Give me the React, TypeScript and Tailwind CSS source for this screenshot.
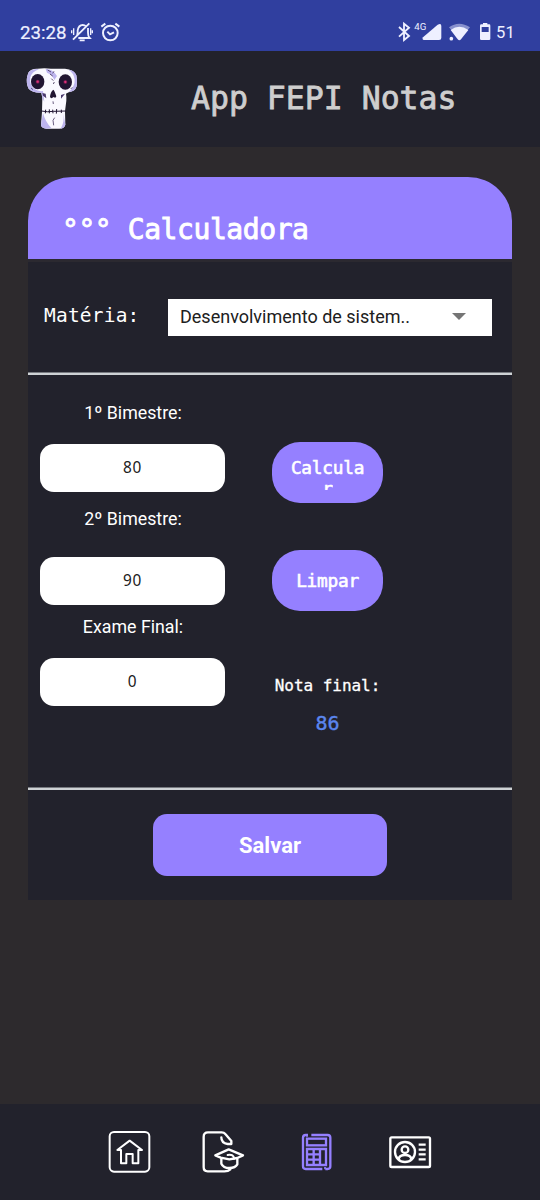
import type { ReactNode } from "react";

const mono = "font-['DejaVu_Sans_Mono',monospace]";

function Skull() {
  return (
    <svg className="h-[80px] w-[75px]" viewBox="0 0 225 240">
      <path
        d="M40 38Q48 25 68 26Q88 23 108 26L150 26Q176 28 184 46Q188 60 185 79Q180 95 161 97L153 101Q155 112 154 122L150 154L151 194Q148 206 133 206L94 206Q79 205 78 195L81 156L82 113L79 98Q53 99 41 86Q33 72 36 52Z"
        fill="#faf9ff"
      />
      <path
        d="M40 38Q48 26 72 27Q50 36 46 52Q42 77 60 88Q70 95 84 93L88 125L82 114L79 98Q53 99 41 86Q33 72 36 52ZM84 159Q91 186 109 204L94 206Q79 205 78 195ZM160 29Q178 30 184 46Q188 60 185 79Q180 95 161 97Q181 78 179 58Q176 38 160 29ZM145 161L151 194Q148 204 137 206Q149 185 145 161ZM92 27Q112 26 126 48L118 60Q112 44 96 38Z"
        fill="#bdb4ee"
      />
      <ellipse cx="68" cy="65" rx="20" ry="23" fill="#211532" />
      <ellipse cx="151" cy="66" rx="20" ry="23" fill="#211532" />
      <circle cx="68" cy="65" r="6" fill="#681d4b" />
      <circle cx="151" cy="66" r="6" fill="#681d4b" />
      <circle cx="68" cy="65" r="3.5" fill="#e0307a" />
      <circle cx="151" cy="66" r="3.5" fill="#e0307a" />
      <path d="M115 89Q119 92 124 109Q122 116 116 111Q108 118 105 111Q106 96 115 89Z" fill="#211532" />
      <path d="M98 30L108 36M105 42L113 48M109 56L115 62M117 34L113 40M118 66L115 72" fill="none" stroke="#49395f" strokeWidth="2.6" />
      <path d="M79 153Q97 157 116 154L152 153M92 149L91 160M103 148L103 160M113 149L114 160M125 147L124 161M139 149L139 159" fill="none" stroke="#211532" strokeWidth="3" />
      <path d="M114 124L115 132M119 173L114 181L116 196M48 84L54 89M172 82L167 87" fill="none" stroke="#4d3e68" strokeWidth="2.5" />
      <path d="M82 99L92 101L94 115L84 107ZM138 105L150 101L138 116Z" fill="#4b3a6e" />
    </svg>
  );
}

function StatusBar() {
  return (
    <div className="flex h-[51px] shrink-0 items-start justify-between bg-[#303f9f] font-[Roboto,sans-serif] text-[#eef0ff]">
      <div className="flex pl-[20px] pt-[20px]">
        <span className="w-[50px] text-[18.7px] leading-[26px] [-webkit-text-stroke:0.2px_#eef0ff]">23:28</span>
        <svg className="h-[26px] w-[54px]" viewBox="210 60 162 78" fill="none" stroke="currentColor" strokeWidth="5.5">
          <path d="M227 111Q233 107 233 96V91Q236 75 248 75Q254 75 258 79M264 84V98Q264 109 269 114H235M219 119L268 70M239 121H254" />
          <path d="M215 91V100M221 85V105M272 85V105M277 91V100" strokeWidth="4" />
          <circle cx="331" cy="99" r="22" strokeWidth="6" />
          <path d="M304 80L316 71M346 71L358 80M322 95L330 103L342 97" strokeWidth="6" />
        </svg>
      </div>
      <div className="flex pr-[25px] pt-[20px]">
        <svg className="h-[26px] w-[104px]" viewBox="380 60 312 78">
          <path d="M386 81L416 108L401 120V71L416 83L386 110" fill="none" stroke="currentColor" strokeWidth="5.5" />
          <text x="432" y="91" fill="currentColor" fontFamily="Roboto, sans-serif" fontSize="29">4G</text>
          <path d="M461 120Q454 119 458 112L502 74Q513 68 513 78V113Q513 120 506 120Z" fill="currentColor" />
          <path d="M536 82Q566 60 599 82L589 94Q566 79 546 94Z" fill="#8790ce" />
          <path d="M541 90Q567 71 594 90L572 118Q567 124 562 118Z" fill="currentColor" />
          <circle cx="543" cy="116" r="5.5" fill="currentColor" />
          <path d="M638 73V69H651V73H657Q660 73 660 77V116Q660 120 656 120H633Q629 120 629 116V77Q629 73 633 73Z" fill="currentColor" />
          <path d="M634 81H655V96H634Z" fill="#303f9f" />
        </svg>
        <span className="-ml-[5px] w-[19px] text-[16.5px] leading-[26px] tracking-[0.3px]">51</span>
      </div>
    </div>
  );
}

function Grade({ label, value, gap }: { label: string; value: string; gap: string }) {
  return (
    <div className={`flex flex-col items-center ${gap}`}>
      <div className="h-[24px] pl-[1px] font-[Roboto,sans-serif] text-[17.8px] leading-[24px] text-white">{label}</div>
      <div className="h-[48px] w-[185px] rounded-[14px] bg-white text-center font-['Noto_Sans',sans-serif] text-[15.4px] leading-[48px] tracking-[0.7px] text-[#202020]">
        {value}
      </div>
    </div>
  );
}

function Pill({ children }: { children: ReactNode }) {
  return (
    <button
      className={`flex h-[61px] w-[111px] flex-col items-center rounded-[28px] bg-[#9580ff] pt-[14px] text-[17.8px] leading-[24px] tracking-[-0.25px] text-white [-webkit-text-stroke:0.6px_white] ${mono}`}
    >
      {children}
    </button>
  );
}

function BottomNav() {
  return (
    <nav className="flex h-[96px] shrink-0 items-center bg-[#22222c] pl-[108px] text-white">
      <svg className="h-[48px] w-[43px]" viewBox="54 99 129 144" fill="none" stroke="currentColor" strokeWidth="6">
        <rect x="59" y="111" width="119" height="119" rx="13" />
        <path d="M119 137L82 165H93V205H109V177H128V205H145V165H156Z" strokeWidth="6" strokeLinejoin="round" />
      </svg>
      <svg className="ml-[50px] h-[48px] w-[45px]" viewBox="333 99 135 144" fill="none" stroke="currentColor" strokeWidth="7" strokeLinejoin="round" strokeLinecap="round">
        <path d="M421 223Q414 230 400 229H353Q341 229 341 217V125Q341 112 354 112H395Q402 112 406 117L424 138V147H413Q394 145 394 127" />
        <path d="M376 181L416 163L459 181L442 189L418 193L392 188ZM394 190V206Q400 219 418 219Q436 219 442 208V190" />
        <path d="M413 180Q432 177 432 191" strokeWidth="6" />
      </svg>
      <svg className="ml-[54px] h-[48px] w-[35px] text-[#9580ff]" viewBox="90 99 105 144" fill="none" stroke="currentColor" strokeWidth="7">
        <path d="M114 120H107Q99 120 99 128V214Q99 222 107 222H157M124 120H173Q181 120 181 128V214Q181 222 173 222H166" />
        <path d="M111 119V125M165 223V216" strokeWidth="5" />
        <rect x="111" y="131" width="57" height="20" />
        <path d="M111 162H168V210H111ZM131 162V210M150 162V210M111 178H150M111 194H150" />
      </svg>
      <svg className="ml-[53px] h-[48px] w-[45px]" viewBox="354 99 135 144" fill="none" stroke="currentColor" strokeWidth="7">
        <rect x="361" y="127" width="119" height="89" rx="4" />
        <circle cx="405" cy="171" r="30" />
        <circle cx="405" cy="164" r="10" />
        <path d="M386 192Q388 180 405 180Q422 180 424 192M446 149H467M446 164H467M446 178H467M446 193H467" />
      </svg>
    </nav>
  );
}

export default function App() {
  return (
    <div className="flex h-[1200px] w-[540px] flex-col overflow-hidden bg-[#2d2a2d]">
      <StatusBar />
      <header className="flex h-[96px] shrink-0 items-start bg-[#22222c] pl-[15px] pt-[9px]">
        <Skull />
        <h1 className={`ml-[101px] mt-[18px] whitespace-pre text-[31.5px] leading-[40px] text-[#cecece] [-webkit-text-stroke:0.8px_#cecece] ${mono}`}>
          App FEPI Notas
        </h1>
      </header>
      <main className="flex flex-1 flex-col px-[28px] pt-[30px]">
        <section className="flex flex-col overflow-hidden rounded-t-[44px] bg-[#22222c]">
          <h2
            className={`h-[85px] whitespace-pre border-b-[3px] border-[#2b2930] bg-[#9580ff] pl-[34px] pt-[33px] text-[28px] leading-[40px] tracking-[-0.42px] text-white [-webkit-text-stroke:0.9px_white] ${mono}`}
          >
            °°° Calculadora
          </h2>
          <div className="flex h-[110px] items-start pl-[16px] pt-[37px]">
            <div className={`w-[124px] text-[19.5px] leading-[34px] tracking-[0.2px] text-white ${mono}`}>Matéria:</div>
            <div className="flex h-[37px] w-[324px] items-start justify-between bg-white pl-[12px] pr-[26px] font-[Roboto,sans-serif] text-[18px] leading-[35px] text-[#202020]">
              <span>Desenvolvimento de sistem..</span>
              <svg className="mt-[14px] h-[7px] w-[14px]" viewBox="0 0 14 7">
                <path d="M0 0H14L7 7Z" fill="#757575" />
              </svg>
            </div>
          </div>
          <div className="h-[3px] border-t border-[#777a80] bg-[#ced2d5]" />
          <div className="flex h-[412px]">
            <div className="flex flex-col pl-[12px] pt-[26px]">
              <Grade label="1º Bimestre:" value="80" gap="gap-[19px]" />
              <div className="h-[15px]" />
              <Grade label="2º Bimestre:" value="90" gap="gap-[26px]" />
              <div className="h-[10px]" />
              <Grade label="Exame Final:" value="0" gap="gap-[19px]" />
            </div>
            <div className="ml-[47px] flex w-[111px] flex-col items-center pt-[67px]">
              <Pill>
                <span>Calcula</span>
                <span className="h-[10px] overflow-hidden leading-[18px]">r</span>
              </Pill>
              <div className="h-[47px]" />
              <Pill>
                <span className="mt-[5px]">Limpar</span>
              </Pill>
              <div className={`mt-[62px] whitespace-nowrap text-[16px] leading-[26px] tracking-[-0.03px] text-white [-webkit-text-stroke:0.3px_white] ${mono}`}>
                Nota final:
              </div>
              <div className={`mt-[9px] text-[20px] leading-[30px] text-[#5b86ef] [-webkit-text-stroke:0.4px_#5b86ef] ${mono}`}>86</div>
            </div>
          </div>
          <div className="h-[3px] border-t border-[#777a80] bg-[#ced2d5]" />
          <div className="flex h-[110px] justify-center pt-[24px]">
            <button className="h-[62px] w-[234px] rounded-[14px] bg-[#9580ff] pt-[1px] font-[Roboto,sans-serif] text-[22px] font-bold leading-[62px] text-white">
              Salvar
            </button>
          </div>
        </section>
      </main>
      <BottomNav />
    </div>
  );
}
